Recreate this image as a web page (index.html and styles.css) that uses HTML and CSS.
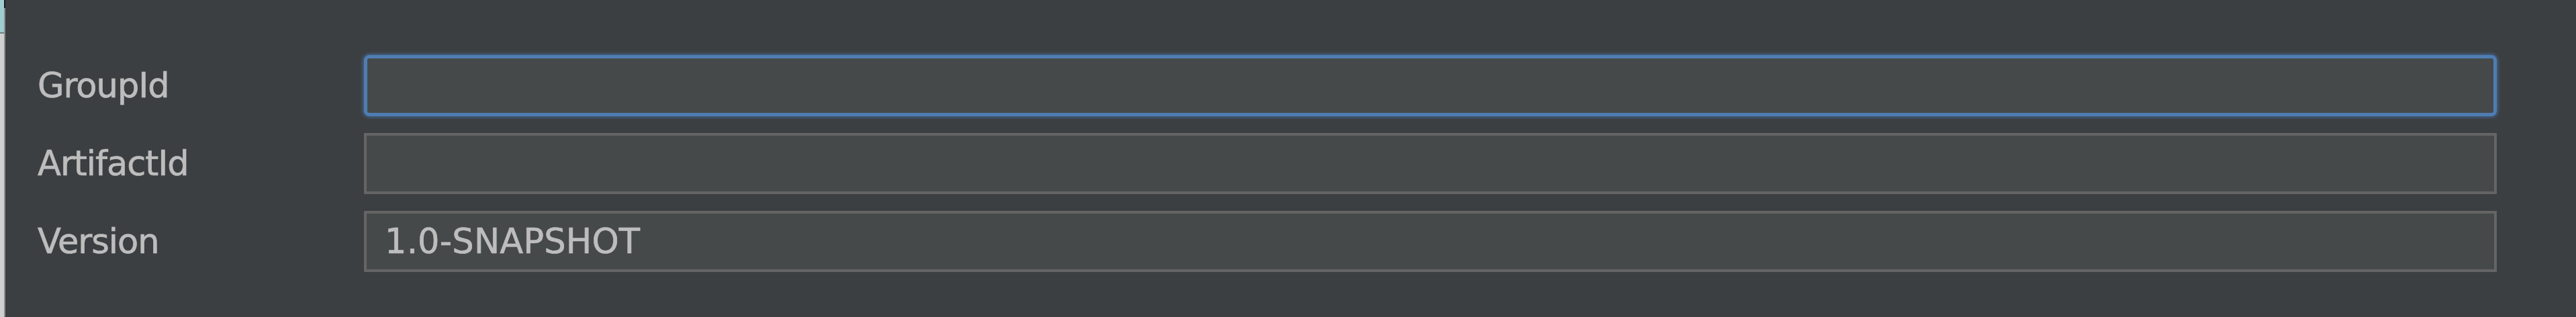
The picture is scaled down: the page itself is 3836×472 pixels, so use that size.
FILE: index.html
```html
<!DOCTYPE html>
<html>
<head>
<meta charset="utf-8">
<link rel="stylesheet" href="styles.css">
</head>
<body>
<div class="page">
  <div class="strip"><span class="strip-mark"></span></div>
  <div class="form">
    <label class="label">GroupId</label>
    <div class="field focused"></div>
    <label class="label">ArtifactId</label>
    <div class="field"></div>
    <label class="label">Version</label>
    <div class="field">1.0-SNAPSHOT</div>
  </div>
</div>
</body>
</html>
```
FILE: styles.css
```css
html, body {
  margin: 0;
  padding: 0;
  background: #3c3f41;
}
.page {
  display: grid;
  grid-template-columns: 8px 1fr;
  width: 3836px;
  height: 472px;
  overflow: hidden;
}
.strip {
  position: relative;
  background: linear-gradient(to right, transparent 0 6px, #8e8e8e 6px 8px),
              linear-gradient(to bottom, #9fcdd0 0 48px, #6d7f81 48px 50px, #d0d0d0 50px 100%);
}
.strip-mark {
  position: absolute;
  right: 0;
  top: 0;
  width: 2px;
  height: 12px;
  background: #1e1e1e;
}
.form {
  display: grid;
  grid-template-columns: 486px 3176px;
  grid-auto-rows: 91px;
  align-content: start;
  row-gap: 25px;
  padding: 82px 0 0 48px;
  font-family: "DejaVu Sans", "Liberation Sans", sans-serif;
  font-size: 51px;
  color: #bdbdbd;
  -webkit-text-stroke: 0.7px #bdbdbd;
}
.label {
  display: flex;
  align-items: center;
  letter-spacing: -1px;
}
.field {
  box-sizing: border-box;
  background: #45494a;
  border: 4px solid #656565;
  display: flex;
  align-items: center;
  padding-left: 27px;
  letter-spacing: 0.2px;
}
.field.focused {
  border: 5px solid #4f7db2;
  border-radius: 8px;
  padding-left: 26px;
  box-shadow: 0 0 4px 2px #44638a;
}
```
